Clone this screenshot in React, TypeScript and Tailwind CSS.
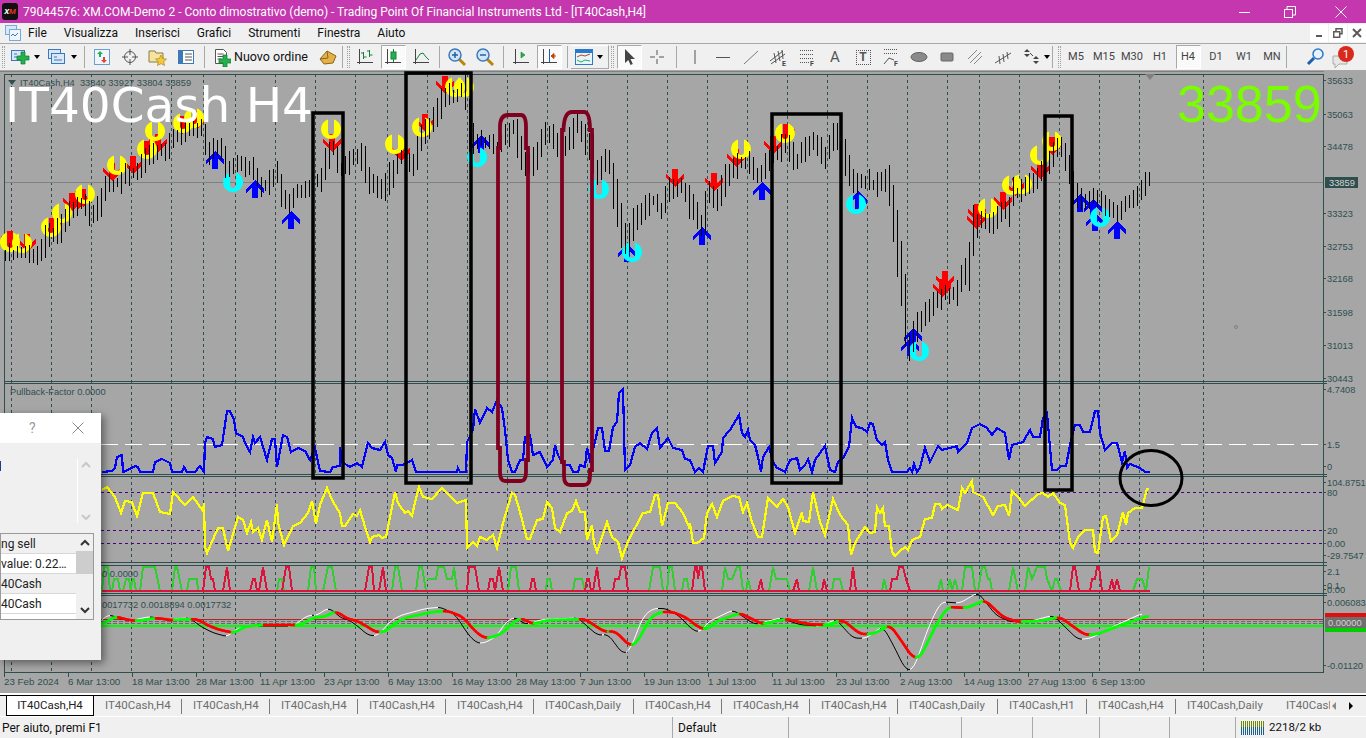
import React from "react";

type P = [number, number];

const gridX = [11,51,91,131,171,203,235,275,315,355,387,427,467,507,547,587,627,667,707,747,787,827,867,907,947,979,1019,1059,1099,1139,1203];

const price: P[] = [[5,253],[40,253],[47,237],[60,230],[67,217],[83,203],[92,217],[100,203],[107,183],[120,183],[123,177],[137,173],[143,160],[157,153],[167,153],[173,140],[187,130],[203,127],[207,150],[220,147],[227,170],[240,160],[253,170],[263,187],[277,173],[283,200],[290,203],[297,190],[307,190],[312,183],[320,180],[327,160],[333,147],[340,170],[347,163],[355,155],[363,157],[370,183],[383,190],[390,177],[400,157],[412,167],[420,140],[430,127],[440,107],[447,93],[457,93],[465,90],[467,118],[473,140],[497,147],[513,127],[525,163],[532,163],[540,145],[548,130],[560,153],[570,140],[578,123],[588,147],[595,157],[597,173],[608,157],[613,183],[620,220],[627,247],[635,217],[643,210],[653,200],[662,210],[668,190],[683,187],[693,210],[703,227],[708,190],[717,203],[723,183],[733,170],[743,160],[748,163],[758,177],[763,170],[770,157],[780,150],[787,140],[795,163],[803,150],[813,140],[825,157],[835,133],[843,147],[852,183],[860,183],[868,180],[875,187],[883,177],[890,187],[893,213],[897,243],[900,270],[903,283],[908,350],[915,330],[927,313],[937,300],[947,293],[957,293],[963,273],[969,267],[973,230],[980,217],[992,227],[1000,213],[1010,210],[1013,193],[1025,190],[1035,180],[1045,165],[1055,150],[1062,150],[1068,165],[1075,195],[1085,200],[1095,195],[1105,205],[1115,215],[1125,205],[1135,197],[1145,185],[1150,180]];

const blue: P[] = [[102,472],[112,471],[115,468],[117,457],[122,455],[123,472],[132,468],[135,466],[138,467],[140,472],[153,472],[155,462],[162,459],[170,463],[172,472],[182,472],[184,467],[187,472],[195,472],[200,466],[204,472],[205,443],[207,437],[213,439],[215,447],[222,445],[227,411],[230,411],[234,420],[236,433],[243,437],[245,443],[250,452],[253,437],[255,443],[260,437],[267,460],[272,439],[275,439],[277,467],[283,435],[287,437],[291,452],[298,448],[305,451],[310,460],[315,448],[320,471],[330,472],[333,467],[340,466],[340,447],[342,462],[350,467],[357,463],[362,467],[368,443],[372,448],[380,450],[385,442],[388,455],[392,458],[396,472],[397,465],[403,465],[412,460],[416,472],[457,472],[458,468],[460,472],[466,472],[467,442],[473,430],[475,409],[480,423],[487,408],[492,412],[497,400],[502,408],[505,430],[508,460],[512,472],[515,472],[520,460],[523,460],[525,437],[530,435],[533,455],[540,452],[547,467],[553,460],[555,445],[558,455],[563,465],[570,465],[573,472],[578,472],[580,465],[585,467],[587,448],[590,460],[595,442],[598,428],[602,428],[605,451],[609,451],[613,427],[617,422],[619,393],[623,389],[624,430],[625,470],[630,465],[635,447],[640,443],[647,449],[652,433],[657,428],[660,448],[668,438],[673,448],[682,450],[685,459],[690,460],[695,472],[699,468],[703,472],[708,446],[713,446],[715,463],[722,452],[723,438],[730,430],[739,415],[742,433],[745,437],[748,430],[750,440],[755,445],[758,457],[761,472],[763,457],[769,447],[773,462],[777,468],[782,470],[785,472],[790,460],[797,458],[800,470],[805,465],[808,459],[812,472],[815,460],[825,446],[830,470],[835,472],[838,462],[843,458],[849,447],[852,418],[856,427],[862,428],[867,432],[870,423],[873,424],[877,440],[882,445],[885,442],[888,460],[892,472],[907,472],[910,468],[912,472],[914,464],[917,472],[920,468],[925,448],[930,462],[938,446],[942,450],[957,446],[958,452],[967,443],[972,428],[980,424],[987,428],[992,435],[997,428],[1005,433],[1009,460],[1012,445],[1023,442],[1030,430],[1033,437],[1040,437],[1043,418],[1047,413],[1052,470],[1057,470],[1061,466],[1066,466],[1071,440],[1075,425],[1080,425],[1083,432],[1090,432],[1095,411],[1098,411],[1100,433],[1105,450],[1112,443],[1117,443],[1122,462],[1125,451],[1127,468],[1130,464],[1140,468],[1145,472],[1150,472]];

const yellow: P[] = [[102,490],[107,487],[115,497],[121,513],[125,501],[132,502],[137,516],[143,493],[153,493],[160,512],[170,514],[173,492],[185,505],[193,497],[203,511],[204,503],[205,547],[207,553],[218,528],[223,528],[228,551],[238,517],[243,520],[247,533],[251,522],[253,532],[258,528],[262,540],[267,520],[272,542],[277,504],[278,523],[284,545],[293,526],[300,523],[308,513],[312,501],[316,524],[320,505],[327,488],[333,502],[340,513],[342,526],[345,526],[353,514],[357,516],[360,510],[365,527],[370,542],[372,537],[379,535],[382,538],[386,537],[395,492],[398,503],[405,513],[408,511],[412,516],[415,502],[419,487],[423,497],[432,499],[442,488],[448,494],[457,503],[466,500],[467,548],[473,542],[477,546],[480,537],[487,540],[493,535],[497,548],[503,523],[512,493],[515,495],[520,512],[527,539],[530,539],[537,520],[543,519],[547,502],[552,508],[555,528],[560,532],[567,513],[572,511],[576,501],[580,512],[585,512],[587,540],[592,525],[594,543],[597,552],[607,522],[612,537],[618,542],[622,558],[628,541],[643,513],[650,512],[655,495],[658,495],[662,526],[668,503],[675,503],[683,513],[689,527],[690,523],[693,543],[697,543],[704,538],[707,513],[712,504],[717,517],[723,501],[732,496],[739,497],[743,512],[747,503],[752,522],[758,537],[762,537],[768,498],[777,507],[783,499],[788,507],[795,533],[802,512],[803,521],[809,522],[813,492],[820,522],[825,535],[833,499],[840,515],[848,525],[851,555],[855,543],[865,527],[870,533],[875,532],[877,507],[880,513],[883,508],[885,526],[889,526],[892,552],[895,556],[900,551],[905,547],[908,550],[912,540],[920,537],[925,519],[932,518],[935,504],[940,504],[942,509],[947,505],[958,510],[962,488],[965,493],[972,481],[973,492],[983,497],[993,515],[998,506],[1005,505],[1009,516],[1012,491],[1018,497],[1025,506],[1038,494],[1043,493],[1048,497],[1053,493],[1060,503],[1065,505],[1070,543],[1073,548],[1078,537],[1085,530],[1093,530],[1095,552],[1098,553],[1103,517],[1106,516],[1111,541],[1117,535],[1123,512],[1126,525],[1128,513],[1135,508],[1142,508],[1147,489],[1149,489]];

const signalRaw: P[] = [[102,624],[117,616],[123,619],[137,621],[157,618],[170,620],[197,619],[207,625],[220,630],[235,633],[243,627],[260,625],[300,625],[315,617],[325,617],[333,612],[340,613],[347,619],[355,620],[368,627],[375,632],[385,632],[398,621],[408,617],[433,612],[448,611],[463,617],[472,628],[482,637],[490,638],[503,633],[513,622],[522,618],[532,624],[550,620],[557,620],[585,619],[597,627],[605,632],[615,631],[622,638],[630,646],[637,643],[650,618],[660,612],[673,612],[687,618],[698,627],[707,630],[715,622],[740,613],[762,624],[787,619],[807,624],[827,625],[843,620],[860,634],[873,634],[890,625],[903,643],[912,657],[920,658],[937,623],[948,607],[967,608],[985,600],[1003,617],[1018,622],[1040,621],[1060,617],[1085,635],[1098,634],[1113,628],[1127,623],[1148,616]];

const greenPeaks: P[][] = [
  [[102,591],[104,567],[108,567],[110,591]],[[112,591],[114,579],[118,579],[120,591]],[[123,591],[126,579],[129,579],[131,591]],[[130,591],[133,579],[134,579],[136,591]],
  [[140,591],[143,567],[155,567],[160,591]],[[172,591],[175,567],[177,567],[182,591]],[[187,591],[189,579],[197,579],[198,591]],[[277,591],[279,579],[282,579],[284,591]],
  [[308,591],[311,567],[314,567],[316,591]],[[323,591],[328,567],[332,567],[336,591]],[[392,591],[395,567],[398,567],[402,591]],[[416,591],[419,567],[422,567],[426,591]],
  [[427,579],[436,579],[438,567],[444,567],[447,579],[452,579],[454,567],[457,591],[427,591]],[[508,591],[511,567],[516,567],[519,591]],[[546,591],[547,579],[550,579],[552,591]],
  [[573,591],[575,579],[582,579],[585,591]],[[649,591],[653,567],[660,567],[663,591]],[[667,591],[669,567],[672,567],[675,591]],[[682,591],[684,579],[687,579],[689,591]],
  [[722,591],[725,567],[728,579],[732,579],[737,567],[740,567],[743,591]],[[746,591],[748,579],[751,591]],[[769,591],[773,567],[776,579],[787,579],[790,591]],[[809,591],[813,567],[817,591]],
  [[832,591],[834,579],[840,579],[843,591]],[[882,591],[884,579],[887,591]],[[938,591],[941,579],[943,591]],[[947,591],[950,579],[952,591],[955,579],[958,591]],
  [[962,591],[965,567],[972,567],[975,591]],[[978,591],[982,567],[985,567],[988,579],[990,579],[992,591]],[[1009,591],[1013,567],[1018,591]],[[1025,591],[1028,567],[1032,579],[1037,567],[1040,567],[1045,567],[1047,579],[1052,591]],
  [[1052,591],[1055,579],[1057,579],[1061,591]],[[1133,591],[1137,579],[1142,579],[1146,591],[1149,567]],
];
const redPeaks: P[][] = [
  [[203,591],[206,567],[209,567],[211,579],[213,579],[215,591]],[[223,591],[227,567],[230,591]],[[250,591],[253,579],[255,579],[257,591]],[[259,591],[263,567],[267,591]],[[282,591],[284,579],[286,567],[289,567],[292,591]],
  [[365,591],[369,567],[372,567],[374,591]],[[379,591],[383,567],[386,591]],[[467,591],[469,567],[475,567],[479,591]],[[488,591],[490,579],[493,579],[495,591]],[[495,591],[499,567],[503,591]],
  [[530,591],[532,579],[534,579],[536,591]],[[585,591],[587,579],[589,579],[591,591]],[[593,591],[597,567],[600,591]],[[613,591],[615,579],[619,579],[621,567],[625,567],[628,591]],
  [[692,591],[695,567],[697,567],[698,579],[700,567],[702,567],[705,591]],[[758,591],[761,579],[763,591]],[[793,591],[797,579],[799,591]],[[822,591],[824,579],[827,591]],[[850,591],[853,567],[856,591]],
  [[890,591],[892,579],[897,579],[899,567],[903,567],[906,579],[910,591]],[[1070,591],[1073,567],[1075,567],[1079,591]],[[1090,591],[1092,579],[1095,579],[1097,567],[1099,567],[1102,591]],
  [[1109,591],[1112,579],[1114,591],[1117,579],[1120,591]],
];

const yellowMarks: P[] = [[10,242],[22,243],[51,227],[62,213],[85,194],[117,165],[147,149],[155,131],[183,123],[194,118],[331,129],[395,144],[422,127],[455,87],[464,87],[741,149],[785,133],[988,208],[1012,185],[1022,184],[1040,155],[1052,141]];
const cyanMarks: P[] = [[233,182],[477,157],[599,189],[632,252],[856,204],[919,351],[1100,217]];
const redMarks: P[] = [[10,240],[27,243],[52,227],[72,202],[78,200],[83,198],[112,172],[133,165],[147,150],[158,143],[182,125],[197,120],[332,143],[401,152],[425,123],[445,85],[675,178],[714,182],[736,158],[773,145],[786,133],[945,280],[942,288],[977,213],[976,220],[1003,201],[1015,187],[1040,170],[1052,146]];
const blueMarks: P[] = [[215,160],[255,189],[291,220],[481,144],[627,253],[702,236],[762,191],[858,200],[913,337],[910,347],[1080,203],[1095,222],[1093,208],[1117,230]];

const axisLabels: [string, number][] = [["35633",80],["35063",114],["34478",146],["33323",213],["32753",246],["32168",278],["31598",312],["31013",345],["30443",378],["4.7408",389],["1.5",444],["0",466],["104.8751",482],["80",492],["20",530],["0.00",543],["-29.7547",555],["2.1",571],["0.1",585],["0.00",589],["0.006083",602],["-0.01120",665]];
const dates: [string, number][] = [["23 Feb 2024",4],["6 Mar 13:00",68],["18 Mar 13:00",132],["28 Mar 13:00",196],["11 Apr 13:00",260],["23 Apr 13:00",324],["6 May 13:00",388],["16 May 13:00",452],["28 May 13:00",516],["7 Jun 13:00",580],["19 Jun 13:00",644],["1 Jul 13:00",708],["11 Jul 13:00",772],["23 Jul 13:00",836],["2 Aug 13:00",900],["14 Aug 13:00",964],["27 Aug 13:00",1028],["6 Sep 13:00",1092]];

const lerp = (pts: P[], x: number) => {
  if (x <= pts[0][0]) return pts[0][1];
  for (let i = 1; i < pts.length; i++) {
    if (x <= pts[i][0]) {
      const [x0, y0] = pts[i - 1];
      const [x1, y1] = pts[i];
      return x1 === x0 ? y1 : y0 + ((y1 - y0) * (x - x0)) / (x1 - x0);
    }
  }
  return pts[pts.length - 1][1];
};
const str = (pts: P[]) => pts.map((p) => p.join(",")).join(" ");
const rng = (i: number) => {
  const s = Math.sin(i * 12.9898) * 43758.5453;
  return s - Math.floor(s);
};
const smooth = (x: number) => {
  let s = 0;
  for (let k = -4; k <= 4; k += 2) s += lerp(signalRaw, x + k);
  return s / 5;
};

const barPaths: string[] = [];
for (let x = 5, i = 0; x <= 1150; x += 4, i++) {
  const c = lerp(price, x);
  const slope = Math.abs(lerp(price, x + 4) - lerp(price, x - 4)) / 2;
  const up = 3 + rng(i) * 8 + slope * 0.8;
  const down = 3 + rng(i + 500) * 8 + slope * 0.8;
  barPaths.push(`M${x + 0.5} ${Math.round(c - up)}V${Math.round(c + down)}`);
}

const signal: P[] = [];
for (let x = 102; x <= 1148; x += 2) signal.push([x, smooth(x)]);
const macd: P[] = [];
for (let x = 102; x <= 1142; x += 2) macd.push([x, 622 + (smooth(x + 7) - 622) * 1.35]);

function Arrow({ x, y, color, up }: { x: number; y: number; color: string; up?: boolean }) {
  const pts = "0,-9 9,0 9,4 3,-1 3,9 -3,9 -3,-1 -9,4 -9,0";
  return <polygon points={pts} fill={color} shapeRendering="crispEdges" transform={`translate(${x} ${y}) scale(1 ${up ? 1 : -1})`} />;
}
function Ring({ x, y, color }: { x: number; y: number; color: string }) {
  return <path d="M-3 -9.5 A10 10 0 1 0 3 -9.5 L3 3 A3 3 0 0 1 -3 3 Z" fill={color} transform={`translate(${x} ${y})`} />;
}

function Chart() {
  const fs = { fontFamily: "'Liberation Sans', Arial, sans-serif" };
  return (
    <svg width={1366} height={622} viewBox="0 71 1366 622" className="block" style={fs}>
      <rect x={0} y={71} width={1366} height={622} fill="#a6a6a6" />
      <line x1={0} y1={71.5} x2={1366} y2={71.5} stroke="#808080" />
      {gridX.map((x) => (
        <line key={x} x1={x + 0.5} y1={74} x2={x + 0.5} y2={673} stroke="#2f4f4f" strokeDasharray="3 3" />
      ))}
      <rect x={4.5} y={74.5} width={1319} height={598} fill="none" stroke="#2f4f4f" />
      {[381, 383, 474, 476, 562, 565, 593, 595].map((y) => (
        <line key={y} x1={5} y1={y + 0.5} x2={1323} y2={y + 0.5} stroke="#2f4f4f" />
      ))}
      <line x1={5} y1={182.5} x2={1323} y2={182.5} stroke="#808080" />
      <line x1={5} y1={444.5} x2={1323} y2={444.5} stroke="#ffffff" strokeDasharray="17 7" />
      {[492, 530, 543].map((y) => (
        <line key={y} x1={5} y1={y + 0.5} x2={1323} y2={y + 0.5} stroke="#4b0082" strokeDasharray="3 3" />
      ))}
      <line x1={5} y1={619.5} x2={1323} y2={619.5} stroke="#b22222" />
      {[621.5, 623.5].map((y) => (
        <line key={y} x1={5} y1={y} x2={1323} y2={y} stroke="#696969" strokeDasharray="4 2" />
      ))}
      <line x1={5} y1={626} x2={1323} y2={626} stroke="#00ff00" strokeWidth={2} />

      {redMarks.map((p, i) => <Arrow key={i} x={p[0]} y={p[1]} color="#ff0000" />)}
      {blueMarks.map((p, i) => <Arrow key={i} x={p[0]} y={p[1]} color="#0000ff" up />)}
      {yellowMarks.map((p, i) => <Ring key={i} x={p[0]} y={p[1]} color="#ffff00" />)}
      {cyanMarks.map((p, i) => <Ring key={i} x={p[0]} y={p[1]} color="#00ffff" />)}
      <path d={barPaths.join("")} stroke="#000" fill="none" shapeRendering="crispEdges" />

      <polyline points={str(blue)} fill="none" stroke="#0000ff" strokeWidth={2.2} shapeRendering="crispEdges" />
      <polyline points={str(yellow)} fill="none" stroke="#ffff00" strokeWidth={2.2} shapeRendering="crispEdges" />
      {greenPeaks.map((p, i) => <polyline key={i} points={str(p)} fill="none" stroke="#32cd32" strokeWidth={2} shapeRendering="crispEdges" />)}
      {redPeaks.map((p, i) => <polyline key={i} points={str(p)} fill="none" stroke="#dc143c" strokeWidth={2} shapeRendering="crispEdges" />)}
      <line x1={102} y1={591} x2={1150} y2={591} stroke="#dc143c" strokeWidth={2} />
      {macd.slice(1).map((p, i) => (
        <line key={i} x1={macd[i][0]} y1={macd[i][1]} x2={p[0]} y2={p[1]} stroke={p[1] < macd[i][1] ? "#ffffff" : "#000000"} />
      ))}
      {signal.slice(1).map((p, i) => (
        <line key={i} x1={signal[i][0]} y1={signal[i][1]} x2={p[0]} y2={p[1]} stroke={p[1] < signal[i][1] ? "#00ff00" : "#ff0000"} strokeWidth={2.6} strokeLinecap="round" />
      ))}

      <g fill="none" stroke="#000" strokeWidth={3.5}>
        <rect x={313} y={113} width={30} height={365} />
        <rect x={406} y={73} width={65} height={410} />
        <rect x={772} y={114} width={69} height={369} />
        <rect x={1045} y={116} width={27} height={374} />
        <ellipse cx={1151} cy={478} rx={31} ry={27.5} strokeWidth={3} />
      </g>
      <g fill="none" stroke="#800020" strokeWidth={3.8}>
        <path d="M498 448 V148 H500 V127 Q500 115 508 115 H521 Q526 115 526 127 V148 H528 V460 H526 V472 Q526 481 521 481 H505 Q500 481 500 472 V448 H498 Z" />
        <path d="M562 462 V130 H563.5 Q564 112 572 112 H584 Q590 112 590 130 H592 V470 H590 V476 Q590 485 584 485 H570 Q564 485 564 476 V462 H562 Z" />
      </g>

      <polygon points="8,80 16,80 12,85" fill="#2f4f4f" />
      <text x={20} y={86} fontSize={9.3} fill="#2f4f4f" xmlSpace="preserve">IT40Cash,H4  33840 33927 33804 33859</text>
      <text x={5} y={122} fontSize={48.5} fill="#fff" style={{ fontFamily: "'DejaVu Sans', sans-serif" }}>IT40Cash H4</text>
      <text x={1177} y={122} fontSize={52} fill="#7cfc00">33859</text>
      <polygon points="1145,74 1155,74 1150,80" fill="#808080" />
      <circle cx={1236} cy={327} r={1.5} fill="none" stroke="#808080" />
      <text x={10} y={395} fontSize={9.3} fill="#2f4f4f">Pullback-Factor 0.0000</text>
      <text x={102} y={577} fontSize={9.3} fill="#2f4f4f">0 0.0000</text>
      <text x={102} y={608} fontSize={9.3} fill="#2f4f4f">0017732 0.0018894 0.0017732</text>

      <rect x={1324} y={71} width={42} height={622} fill="#a6a6a6" />
      <line x1={1323.5} y1={74} x2={1323.5} y2={673} stroke="#2f4f4f" />
      {[381, 383, 474, 476, 562, 565, 593, 595].map((y) => (
        <line key={y} x1={1323} y1={y + 0.5} x2={1327} y2={y + 0.5} stroke="#2f4f4f" />
      ))}
      {axisLabels.map(([t, y], i) => (
        <g key={i}>
          <line x1={1323} y1={y + 0.5} x2={1326} y2={y + 0.5} stroke="#2f4f4f" />
          <text x={1327} y={y + 4} fontSize={9.3} fill="#2f4f4f">{t}</text>
        </g>
      ))}
      <rect x={1325} y={177} width={33} height={11} fill="#2f4f4f" />
      <text x={1329} y={186} fontSize={9.3} fill="#d3d3d3">33859</text>
      <rect x={1325} y={613} width={41} height={4} fill="#e01010" />
      <rect x={1325} y={617} width={41} height={11} fill="#6e6e6e" />
      <rect x={1325} y={628} width={41} height={4} fill="#00cc00" />
      <text x={1328} y={626} fontSize={9.3} fill="#d3d3d3">0.00000</text>

      {dates.map(([t, x]) => (
        <g key={t}>
          <line x1={x + 0.5} y1={673} x2={x + 0.5} y2={677} stroke="#2f4f4f" />
          <text x={x} y={685} fontSize={9.8} fill="#2f4f4f">{t}</text>
        </g>
      ))}
    </svg>
  );
}

const ico = "block";
function Grip() {
  return <span className="block h-[22px] w-[3px] border-x border-dotted border-[#a0a0a0]" />;
}
function Sep() {
  return <span className="block h-[22px] w-px bg-[#a8a8a8]" />;
}
function Drop() {
  return <span className="ml-[4px] block h-0 w-0 border-x-[3px] border-t-[4px] border-x-transparent border-t-black" />;
}
function Plus({ x, y }: { x: number; y: number }) {
  return <path d={`M${x - 2} ${y - 6}h4v4h4v4h-4v4h-4v-4h-4v-4h4z`} fill="#22b14c" stroke="#0f7a2c" strokeWidth={0.7} />;
}
function Active({ children }: { children: React.ReactNode }) {
  return <div className="flex h-[24px] w-[25px] items-center justify-center border-y border-r border-l border-t-[#a8a8a8] border-l-[#a8a8a8] border-r-white border-b-white bg-[#fafafa]">{children}</div>;
}
function Axes({ children }: { children?: React.ReactNode }) {
  return (
    <svg width={18} height={18} viewBox="0 0 18 18" className={ico}>
      <path d="M3.5 1v15M1 14.5h16" stroke="#444" fill="none" />
      {children}
    </svg>
  );
}
function Tf({ t, active }: { t: string; active?: boolean }) {
  return (
    <div className="flex h-[26px] w-[28px] items-center justify-center text-[11px] text-[#444]">
      {active ? <Active><span>{t}</span></Active> : t}
    </div>
  );
}
function Cell({ children }: { children?: React.ReactNode }) {
  return <div className="flex h-[26px] w-[28px] shrink-0 items-center justify-center">{children}</div>;
}
function DrawIcon({ children }: { children: React.ReactNode }) {
  return (
    <svg width={20} height={20} viewBox="0 0 20 20" className={ico} fill="none" stroke="#555">
      {children}
    </svg>
  );
}

function Toolbar() {
  return (
    <div className="flex h-[28px] shrink-0 items-center border-y border-[#a8a8a8] bg-[#f0f0f0] text-[12px] text-[#111]">
      <div className="flex w-[7px] justify-center"><Grip /></div>
      <div className="flex w-[34px] items-center pl-[3px]">
        <svg width={20} height={18} viewBox="0 0 20 18" className={ico}>
          <rect x={1.5} y={2.5} width={13} height={10} fill="#d6e8fa" stroke="#3f78b8" />
          <path d="M4 6h3M4 9h6" stroke="#3f78b8" />
          <Plus x={13} y={10} />
        </svg>
        <Drop />
      </div>
      <div className="flex w-[39px] items-center pl-[6px]">
        <svg width={20} height={18} viewBox="0 0 20 18" className={ico}>
          <rect x={1.5} y={1.5} width={12} height={9} fill="#d6e8fa" stroke="#3f78b8" />
          <rect x={4.5} y={5.5} width={13} height={10} fill="#d6e8fa" stroke="#3f78b8" />
          <path d="M7 9h3M7 12h8" stroke="#3f78b8" />
        </svg>
        <Drop />
      </div>
      <div className="flex w-[8px] justify-center"><Sep /></div>
      <Cell>
        <svg width={18} height={18} viewBox="0 0 18 18" className={ico}>
          <rect x={1.5} y={1.5} width={15} height={15} fill="#eef5fc" stroke="#6b9fd4" />
          <path d="M7 3l3 3H8v3H6V6H4z" fill="#22b14c" />
          <path d="M11 15l-3-3h2V9h2v3h2z" fill="#e0432a" />
        </svg>
      </Cell>
      <Cell>
        <svg width={18} height={18} viewBox="0 0 18 18" className={ico} fill="none" stroke="#555">
          <circle cx={9} cy={9} r={5.5} />
          <path d="M9 1v6M9 11v6M1 9h6M11 9h6" />
        </svg>
      </Cell>
      <Cell>
        <svg width={20} height={18} viewBox="0 0 20 18" className={ico}>
          <path d="M1 3h6l1 2h7v9H1z" fill="#f4e3a1" stroke="#8d7a3c" />
          <path d="M13 7l1.7 3.6 3.8.5-2.8 2.6.8 3.8-3.5-1.9-3.5 1.9.8-3.8-2.8-2.6 3.8-.5z" fill="#f3c93a" stroke="#a9851c" strokeWidth={0.7} />
        </svg>
      </Cell>
      <Cell>
        <svg width={18} height={18} viewBox="0 0 18 18" className={ico}>
          <rect x={1.5} y={2.5} width={15} height={13} fill="#fff" stroke="#3f78b8" />
          <rect x={2} y={3} width={4} height={12} fill="#3f78b8" />
          <path d="M8 6h7M8 9h7M8 12h7" stroke="#555" />
        </svg>
      </Cell>
      <div className="flex w-[8px] justify-center"><Sep /></div>
      <div className="flex w-[106px] items-center gap-[3px] pl-[6px] text-[12.5px]">
        <svg width={17} height={19} viewBox="0 0 17 19" className={ico}>
          <path d="M1.5 1.5h8l3 3v11h-11z" fill="#fff" stroke="#555" />
          <path d="M3.5 6h6M3.5 8.5h6M3.5 11h4" stroke="#555" />
          <Plus x={11} y={13} />
        </svg>
        <span>Nuovo ordine</span>
      </div>
      <Cell>
        <svg width={18} height={18} viewBox="0 0 18 18" className={ico}>
          <path d="M1 11l7-8 9 5-3 7-9 1z" fill="#e4b04a" stroke="#8a6414" />
          <path d="M8 3l1 7-8 1" fill="none" stroke="#8a6414" />
        </svg>
      </Cell>
      <div className="flex w-[3px] justify-start"><Sep /></div>
      <div className="flex w-[6px] justify-center"><Grip /></div>
      <Cell><Axes><path d="M7.5 11V4M7.5 5H5M7.5 9h3M13.5 9V2M13.5 3H11M13.5 7h3" stroke="#16813a" fill="none" /></Axes></Cell>
      <Cell><Active><Axes><path d="M9.5 1v13" stroke="#16813a" /><rect x={7} y={4} width={5} height={7} fill="#22b14c" stroke="#16813a" /></Axes></Active></Cell>
      <Cell><Axes><path d="M4 12l4-6 3-1 3 4 3 3" stroke="#16813a" fill="none" /></Axes></Cell>
      <div className="flex w-[8px] justify-center"><Sep /></div>
      <Cell>
        <svg width={20} height={20} viewBox="0 0 20 20" className={ico}>
          <path d="M12 12l6 6" stroke="#b8860b" strokeWidth={3} />
          <circle cx={8} cy={8} r={6} fill="#cfe6fa" stroke="#3f78b8" strokeWidth={1.5} />
          <path d="M8 5v6M5 8h6" stroke="#2a5e9b" strokeWidth={1.5} />
        </svg>
      </Cell>
      <Cell>
        <svg width={20} height={20} viewBox="0 0 20 20" className={ico}>
          <path d="M12 12l6 6" stroke="#b8860b" strokeWidth={3} />
          <circle cx={8} cy={8} r={6} fill="#cfe6fa" stroke="#3f78b8" strokeWidth={1.5} />
          <path d="M5 8h6" stroke="#2a5e9b" strokeWidth={1.5} />
        </svg>
      </Cell>
      <div className="flex w-[8px] justify-center"><Sep /></div>
      <Cell><Axes><path d="M9 4v6l4-3z" fill="#22b14c" stroke="#16813a" strokeWidth={0.6} /></Axes></Cell>
      <Cell><Active><Axes><path d="M9.5 1v13" stroke="#1c5fb0" /><path d="M16 8h-4M14 5.5L11 8l3 2.5z" fill="#c1440e" stroke="#c1440e" /></Axes></Active></Cell>
      <div className="flex w-[8px] justify-center"><Sep /></div>
      <div className="flex h-[24px] w-[38px] items-center border-y border-r border-t-white border-r-[#a8a8a8] border-b-[#a8a8a8] pl-[4px]">
        <svg width={18} height={16} viewBox="0 0 18 16" className={ico}>
          <rect x={0.5} y={0.5} width={17} height={15} fill="#e8f4fd" stroke="#2a7ac9" />
          <rect x={1} y={1} width={16} height={3} fill="#2a7ac9" />
          <path d="M2 8l4-2 4 1 5-2" stroke="#c1440e" fill="none" />
          <path d="M2 11l4 2 4-2 5 1" stroke="#22b14c" fill="none" />
        </svg>
        <Drop />
      </div>
      <div className="flex w-[6px] justify-center"><Grip /></div>
      <Cell>
        <Active>
          <svg width={14} height={18} viewBox="0 0 14 18" className={ico}>
            <path d="M3 1v14l3.3-3 2.3 5 2.2-1-2.3-5H13z" fill="#444" />
          </svg>
        </Active>
      </Cell>
      <Cell><DrawIcon><path d="M10 3v5M10 12v5M3 10h5M12 10h5" /></DrawIcon></Cell>
      <div className="flex w-[10px] justify-center"><Sep /></div>
      <Cell><DrawIcon><path d="M10 3v14" /></DrawIcon></Cell>
      <Cell><DrawIcon><path d="M3 10.5h14" /></DrawIcon></Cell>
      <Cell><DrawIcon><path d="M3 17L17 4" stroke="#777" /></DrawIcon></Cell>
      <Cell><DrawIcon><path d="M1 14L14 4M2 17L16 7M5 6l2 10M9 4l2 10M13 3l1 9" /><text x={13} y={19} fontSize={7} fontWeight={700} stroke="none" fill="#444">E</text></DrawIcon></Cell>
      <Cell><DrawIcon><path d="M3 3.5h14M3 7.5h14M3 11.5h14M3 15.5h9" strokeDasharray="1 1" /><text x={13} y={19} fontSize={7} fontWeight={700} stroke="none" fill="#444">F</text></DrawIcon></Cell>
      <Cell><span className="text-[15px] leading-none text-[#555]">A</span></Cell>
      <Cell>
        <div className="flex h-[15px] w-[15px] items-center justify-center border border-dotted border-[#555] text-[12px] font-bold leading-none text-[#555]">T</div>
      </Cell>
      <Cell><DrawIcon><path d="M3 2.5h14M3 6.5h14" strokeDasharray="1 1" /><path d="M3 17l5-6 5 2" /><text x={13} y={19} fontSize={7} fontWeight={700} stroke="none" fill="#444">F</text></DrawIcon></Cell>
      <Cell><DrawIcon><ellipse cx={10} cy={10} rx={8} ry={4.5} fill="#8a8a8a" stroke="#666" /></DrawIcon></Cell>
      <Cell><DrawIcon><rect x={4} y={6} width={12} height={8} rx={1} fill="#8a8a8a" stroke="#666" /></DrawIcon></Cell>
      <Cell><DrawIcon><path d="M3 12l9-9M5 16L16 5M9 17l8-8" stroke="#888" /></DrawIcon></Cell>
      <Cell><DrawIcon><path d="M2 16L18 6M6 9l1 8M10 7l1 8M14 5l1 7" stroke="#555" /></DrawIcon></Cell>
      <div className="flex w-[35px] items-center pl-[6px]">
        <svg width={17} height={16} viewBox="0 0 17 16" className={ico} fill="#444">
          <path d="M4 0l3 3H1zM4 8L1 5h6zM13 7l3 3h-6zM13 15l-3-3h6z" />
          <path d="M7 4l3 3" stroke="#444" />
        </svg>
        <Drop />
      </div>
      <div className="flex w-[4px] justify-start"><Sep /></div>
      <div className="flex w-[6px] justify-center"><Grip /></div>
      <Tf t="M5" /><Tf t="M15" /><Tf t="M30" /><Tf t="H1" /><Tf t="H4" active /><Tf t="D1" /><Tf t="W1" /><Tf t="MN" />
      <div className="flex w-[16px] justify-start"><Sep /></div>
      <Cell>
        <svg width={20} height={20} viewBox="0 0 20 20" className={ico}>
          <path d="M8 11l-6 6" stroke="#1c5fb0" strokeWidth={3} />
          <circle cx={12} cy={7} r={5} fill="#e8f2fb" stroke="#2a7ac9" strokeWidth={1.5} />
        </svg>
      </Cell>
      <div className="relative h-[26px] w-[30px]">
        <svg width={18} height={14} viewBox="0 0 18 14" className="absolute left-[2px] top-[11px]">
          <path d="M1 1h14v8H7l-4 4V9H1z" fill="#e6e6e6" stroke="#aaa" />
        </svg>
        <span className="absolute left-[8px] top-[2px] flex h-[16px] w-[16px] items-center justify-center rounded-full bg-[#d9291c] text-[11px] leading-none text-white">1</span>
      </div>
    </div>
  );
}

function Dialog() {
  return (
    <div className="absolute left-0 top-[342px] flex h-[247px] w-[101px] flex-col bg-[#f0f0f0] text-[12px] text-[#222] shadow-[3px_3px_8px_rgba(0,0,0,0.45)]">
      <div className="flex h-[30px] shrink-0 items-center bg-white text-[#9a9a9a]">
        <span className="ml-[29px] text-[14px]">?</span>
        <svg width={12} height={12} viewBox="0 0 12 12" className="ml-[36px] block" stroke="#8a8a8a" fill="none"><path d="M0.5 0.5l11 11M11.5 0.5l-11 11" /></svg>
      </div>
      <div className="relative h-[90px] shrink-0">
        <span className="absolute left-0 top-[18px] h-[10px] w-px bg-[#1f3c88]" />
        <div className="absolute left-[77px] top-[16px] flex h-[64px] w-[16px] flex-col items-center justify-between border-l border-white py-[2px] text-[#c8c8c8]">
          <svg width={10} height={8} viewBox="0 0 10 8"><path d="M1 6l4-4 4 4" fill="none" stroke="#c8c8c8" strokeWidth={2} /></svg>
          <svg width={10} height={8} viewBox="0 0 10 8"><path d="M1 2l4 4 4-4" fill="none" stroke="#c8c8c8" strokeWidth={2} /></svg>
        </div>
      </div>
      <div className="flex h-[87px] w-[94px] shrink-0 border border-[#9a9a9a] bg-white">
        <div className="flex min-w-0 flex-1 flex-col">
          {[["ng sell", "bg-[#f0f0f0]"], ["value: 0.22…", "bg-white"], ["40Cash", "bg-[#f0f0f0]"], ["40Cash", "bg-white"]].map(([t, c], i) => (
            <div key={i} className={`flex h-[20px] items-center overflow-hidden whitespace-nowrap border-b border-[#d8d8d8] ${c}`}>{t}</div>
          ))}
        </div>
        <div className="flex w-[17px] shrink-0 flex-col items-center bg-[#f0f0f0]">
          <svg width={10} height={17} viewBox="0 0 10 17" className="block"><path d="M1 11l4-4 4 4" fill="none" stroke="#333" strokeWidth={2} /></svg>
          <div className="h-[23px] w-full bg-[#cdcdcd]" />
          <div className="flex-1" />
          <svg width={10} height={17} viewBox="0 0 10 17" className="block"><path d="M1 6l4 4 4-4" fill="none" stroke="#333" strokeWidth={2} /></svg>
        </div>
      </div>
    </div>
  );
}

const tabs: [string, string][] = [
  ["IT40Cash,H4", "w-[88px]"], ["IT40Cash,H4", "w-[88px]"], ["IT40Cash,H4", "w-[88px]"], ["IT40Cash,H4", "w-[88px]"], ["IT40Cash,H4", "w-[88px]"],
  ["IT40Cash,Daily", "w-[100px]"], ["IT40Cash,H4", "w-[88px]"], ["IT40Cash,H4", "w-[88px]"], ["IT40Cash,H4", "w-[88px]"], ["IT40Cash,Daily", "w-[100px]"],
  ["IT40Cash,H1", "w-[89px]"], ["IT40Cash,H4", "w-[89px]"], ["IT40Cash,Daily", "w-[99px]"], ["IT40Cash,H4", "w-[55px]"],
];

export default function App() {
  const ui = { fontFamily: "Roboto, 'Noto Sans', sans-serif" };
  return (
    <div className="flex h-[738px] w-[1366px] flex-col overflow-hidden bg-[#f0f0f0]" style={ui}>
      <div className="flex h-[23px] shrink-0 items-center bg-[#c437ae] pl-[2px] text-white">
        <div className="flex h-[17px] w-[16px] items-center justify-center rounded-[3px] bg-[#111] text-[8px] font-bold italic leading-none text-white">
          X<span className="text-[#e03030]">M</span>
        </div>
        <span className="ml-[5px] whitespace-nowrap text-[12px]">79044576: XM.COM-Demo 2 - Conto dimostrativo (demo) - Trading Point Of Financial Instruments Ltd - [IT40Cash,H4]</span>
        <div className="ml-auto flex items-center">
          <svg width={12} height={12} viewBox="0 0 12 12" className="block" stroke="#fff"><path d="M0 6.5h11" /></svg>
          <svg width={12} height={12} viewBox="0 0 12 12" className="ml-[33px] block" stroke="#fff" fill="none"><rect x={0.5} y={3.5} width={8} height={8} /><path d="M3 3V0.5h8.5V9H9" /></svg>
          <svg width={12} height={12} viewBox="0 0 12 12" className="ml-[39px] mr-[19px] block" stroke="#fff" fill="none"><path d="M0.5 0.5l11 11M11.5 0.5l-11 11" /></svg>
        </div>
      </div>

      <div className="flex h-[20px] shrink-0 items-center pl-[5px] text-[12px] text-[#111]">
        <svg width={16} height={16} viewBox="0 0 16 16" className="mr-[7px] block">
          <rect x={0.5} y={0.5} width={11} height={9} fill="#d6e8fa" stroke="#7aa9d6" />
          <rect x={4.5} y={4.5} width={11} height={11} fill="#eef5fc" stroke="#7aa9d6" />
          <path d="M6 11l2-2 2 2 3-3" stroke="#3f78b8" fill="none" />
        </svg>
        <div className="flex gap-[17px]">
          <span>File</span><span>Visualizza</span><span>Inserisci</span><span>Grafici</span><span>Strumenti</span><span>Finestra</span><span>Aiuto</span>
        </div>
        <div className="ml-auto flex h-[19px] items-center gap-px">
          {[0, 1, 2].map((i) => (
            <div key={i} className="flex h-[18px] w-[18px] items-center justify-center bg-white">
              <svg width={10} height={10} viewBox="0 0 10 10" className="block" stroke="#5a5a5a" strokeWidth={1.5} fill="none">
                {i === 0 && <path d="M2 8h6" strokeWidth={2} />}
                {i === 1 && <path d="M0.7 3.7h6v5.5h-6zM3 3V0.8h6v5H7" />}
                {i === 2 && <path d="M1 1l8 8M9 1l-8 8" strokeWidth={2} />}
              </svg>
            </div>
          ))}
        </div>
      </div>

      <Toolbar />

      <div className="relative h-[622px] shrink-0">
        <Chart />
        <Dialog />
      </div>

      <div className="h-[23px] shrink-0 border-t-2 border-white">
        <div className="flex h-[21px] items-stretch overflow-hidden border-t border-black pl-[6px] text-[11.5px] text-[#6d6d6d]">
          <div className="flex w-[88px] shrink-0 items-center justify-center border-x border-b border-black bg-white text-[#222]">IT40Cash,H4</div>
          {tabs.map(([t, w], i) => (
            <div key={i} className={`flex shrink-0 items-center overflow-hidden whitespace-nowrap pl-[11px] ${w}`}>
              <span className="flex-1">{t}</span>
              {i < 12 && <span className="h-[15px] w-px shrink-0 bg-[#7a7a7a]" />}
            </div>
          ))}
          <div className="flex w-[36px] shrink-0 items-center gap-[13px] bg-[#f0f0f0] pl-[2px]">
            <span className="h-0 w-0 border-y-[4px] border-r-[4px] border-y-transparent border-r-[#8a8a8a]" />
            <span className="h-0 w-0 border-y-[4px] border-l-[4px] border-y-transparent border-l-black" />
          </div>
        </div>
      </div>

      <div className="flex flex-1 items-center border-t border-white text-[12px] text-[#111]">
        <div className="flex h-full w-[673px] items-center border-r border-[#a8a8a8] pl-[2px]">Per aiuto, premi F1</div>
        <div className="flex h-full w-[116px] items-center border-r border-[#a8a8a8] pl-[5px]">Default</div>
        <div className="h-full w-[101px] border-r border-[#a8a8a8]" />
        <div className="h-full w-[72px] border-r border-[#a8a8a8]" />
        <div className="h-full w-[71px] border-r border-[#a8a8a8]" />
        <div className="h-full w-[67px] border-r border-[#a8a8a8]" />
        <div className="h-full w-[70px] border-r border-[#a8a8a8]" />
        <div className="h-full w-[66px] border-r border-[#a8a8a8]" />
        <div className="flex items-center pl-[5px]">
          <svg width={24} height={14} viewBox="0 0 24 14" className="block">
            {Array.from({ length: 12 }, (_, i) => (
              <g key={i}>
                <rect x={i * 2} y={0} width={1} height={6} fill="#6d8a00" />
                <rect x={i * 2} y={6} width={1} height={8} fill="#1c5f8a" />
              </g>
            ))}
          </svg>
          <span className="ml-[4px] text-[11.5px]">2218/2 kb</span>
        </div>
      </div>
    </div>
  );
}
